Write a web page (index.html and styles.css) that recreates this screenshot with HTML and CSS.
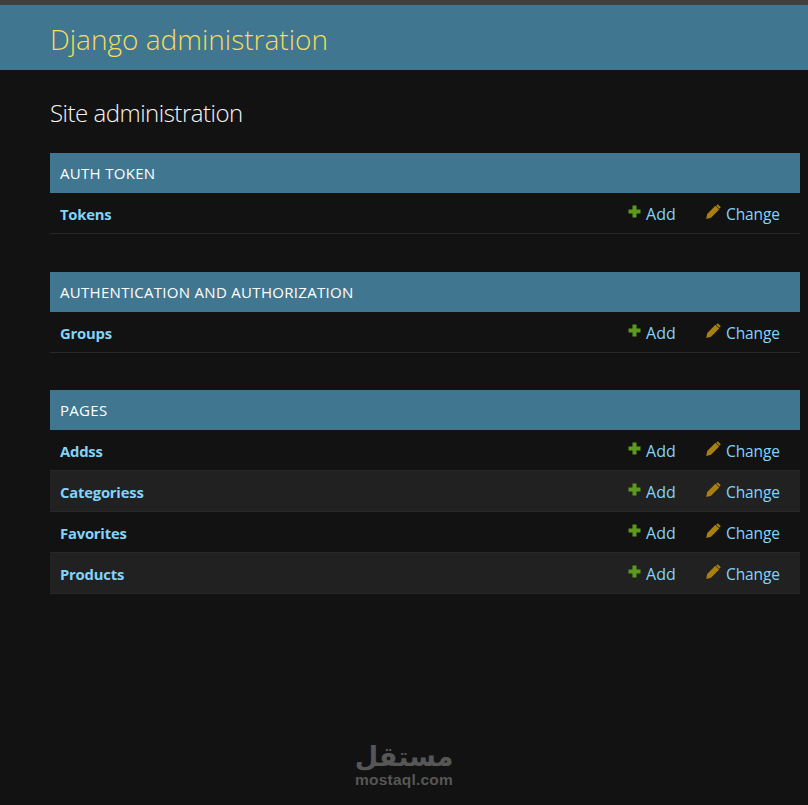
FILE: index.html
```html
<!DOCTYPE html>
<html lang="en">
<head>
<meta charset="utf-8">
<title>Site administration | Django site admin</title>
<link rel="stylesheet" href="styles.css">
</head>
<body>
<svg class="sprites" width="0" height="0" aria-hidden="true">
  <symbol id="plus" viewBox="0 0 13 13"><path d="M4.500 0.500h4v4h4v4h-4v4h-4v-4h-4v-4h4z"/></symbol>
  <symbol id="pencil" viewBox="0 0 15 15"><path d="M11.700 0.200l3.100 3.100-1.500 1.500-3.100-3.100zM9.400 1.800l3.800 3.800-8.200 8.200-4.800 1.200 1-4.900z"/></symbol>
</svg>
<header class="site-header"><h1 class="brand">Django administration</h1></header>
<main class="content">
  <h2 class="page-title">Site administration</h2>
  <section class="module">
    <h3 class="caption">AUTH TOKEN</h3>
    <div class="row"><a class="model">Tokens</a><a class="action add"><svg class="icon"><use href="#plus"/></svg>Add</a><a class="action change"><svg class="icon"><use href="#pencil"/></svg>Change</a></div>
  </section>
  <section class="module tight">
    <h3 class="caption">AUTHENTICATION AND AUTHORIZATION</h3>
    <div class="row"><a class="model">Groups</a><a class="action add"><svg class="icon"><use href="#plus"/></svg>Add</a><a class="action change"><svg class="icon"><use href="#pencil"/></svg>Change</a></div>
  </section>
  <section class="module">
    <h3 class="caption">PAGES</h3>
    <div class="row"><a class="model">Addss</a><a class="action add"><svg class="icon"><use href="#plus"/></svg>Add</a><a class="action change"><svg class="icon"><use href="#pencil"/></svg>Change</a></div>
    <div class="row alt"><a class="model">Categoriess</a><a class="action add"><svg class="icon"><use href="#plus"/></svg>Add</a><a class="action change"><svg class="icon"><use href="#pencil"/></svg>Change</a></div>
    <div class="row"><a class="model">Favorites</a><a class="action add"><svg class="icon"><use href="#plus"/></svg>Add</a><a class="action change"><svg class="icon"><use href="#pencil"/></svg>Change</a></div>
    <div class="row alt"><a class="model">Products</a><a class="action add"><svg class="icon"><use href="#plus"/></svg>Add</a><a class="action change"><svg class="icon"><use href="#pencil"/></svg>Change</a></div>
  </section>
</main>
<div class="watermark"><span class="wm-ar" lang="ar" dir="rtl">مستقل</span><span class="wm-en">mostaql.com</span></div>
</body>
</html>
```
FILE: styles.css
```css
* { box-sizing: border-box; }
html, body { margin: 0; height: 100%; }
body {
  position: relative;
  min-height: 805px;
  overflow: hidden;
  background: #121212;
  color: #f5dd5d;
  font-family: "Open Sans", "Noto Sans", sans-serif;
  border-top: 5px solid #3f3f3f;
}
.sprites { position: absolute; }
.site-header {
  height: 65px;
  background: #417690;
  padding: 2px 50px 0;
  display: flex;
  align-items: center;
}
.brand {
  margin: 0;
  font-size: 28px;
  font-weight: 300;
  color: #f5dd5d;
  letter-spacing: 0;
}
.content { padding: 0 8px 0 50px; }
.page-title {
  margin: 0;
  height: 83px;
  padding-top: 26px;
  font-size: 24px;
  line-height: 33px;
  font-weight: 300;
  color: #f5f5f5;
  letter-spacing: -0.5px;
}
.module { margin-bottom: 38px; }
.module.tight { margin-bottom: 37px; }
.caption {
  margin: 0;
  height: 40px;
  padding: 0 10px;
  display: flex;
  align-items: center;
  background: #417690;
  color: #ffffff;
  font-size: 15px;
  font-weight: 400;
  letter-spacing: 0.3px;
}
.row {
  height: 41px;
  padding: 1px 20px 0 10px;
  display: flex;
  align-items: center;
  border-bottom: 1px solid #282828;
  background: #121212;
  color: #81d4fa;
}
.row.alt { background: #212121; }
.model { flex: 1; font-weight: 700; font-size: 14.800px; letter-spacing: -0.2px; }
.action { display: flex; align-items: center; }
.add { width: 78px; font-size: 16px; letter-spacing: 0.1px; }
.change { width: 74px; font-size: 15.500px; letter-spacing: -0.1px; }
.icon { width: 13px; height: 13px; margin: -4px 5px 0 0; flex: none; }
.add .icon { fill: #5b9a1c; }
.change .icon { width: 15px; height: 15px; margin-right: 5px; fill: #a9800f; }
.watermark {
  position: absolute;
  left: 354px;
  top: 737px;
  width: 100px;
  display: flex;
  flex-direction: column;
  align-items: center;
  color: #565656;
  pointer-events: none;
}
.wm-ar {
  font-family: "DejaVu Sans", sans-serif;
  font-weight: 700;
  font-size: 27px;
  line-height: 30px;
}
.wm-en {
  font-family: "Liberation Sans", sans-serif;
  font-weight: 700;
  font-size: 15.500px;
  line-height: 16px;
  letter-spacing: 0.2px;
}
```
